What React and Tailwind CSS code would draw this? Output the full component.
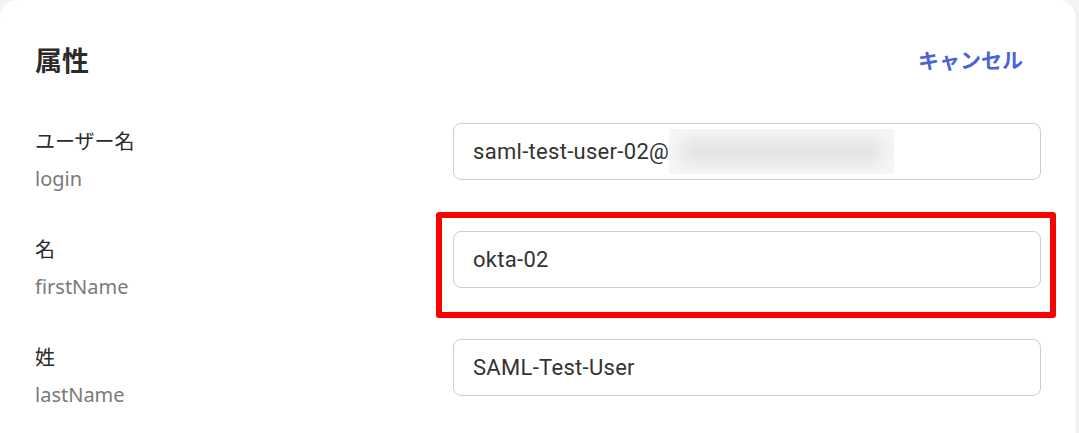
const FONT = { fontFamily: '"Noto Sans", "Noto Sans CJK JP", sans-serif' };
const INPUT_FONT = { fontFamily: 'Roboto, "Noto Sans", sans-serif' };

const ROWS = [
    { label: "ユーザー名", key: "login", value: "saml-test-user-02@", masked: true },
    { label: "名", key: "firstName", value: "okta-02", highlight: true },
    { label: "姓", key: "lastName", value: "SAML-Test-User" },
];

function Field({ value, masked }) {
    return (
        <div
            className="h-[57px] w-full rounded-[8px] border border-[#cfcfcf] bg-white pl-[19px] flex items-center text-[22px] tracking-[0.3px] text-[#333333]"
            style={INPUT_FONT}
        >
            <span>{value}</span>
            {masked && (
                <span className="relative inline-block w-[225px] h-[45px] overflow-hidden bg-[#f6f6f6]">
                    <span className="absolute left-[12px] right-[12px] top-[10px] bottom-[10px] rounded-full bg-[#e2e2e2] blur-[8px]" />
                </span>
            )}
        </div>
    );
}

export default function App() {
    return (
        <div className="min-h-[433px] bg-[#f4f4f4]" style={FONT}>
            <div className="w-[1077px] min-h-[433px] bg-white rounded-t-[18px] border-r border-[#ececec] pl-[35px] pr-[35px] pt-[36px]">
                <div className="flex items-center justify-between h-[50px] pr-[18px]">
                    <h2 className="text-[27px] font-bold text-[#2b2b2b]">属性</h2>
                    <button className="text-[21px] font-bold text-[#4b63d6]">キャンセル</button>
                </div>
                <div className="mt-[37px] flex flex-col">
                    {ROWS.map(row => (
                        <div key={row.key} className="flex items-start h-[108px]">
                            <div className="w-[418px] shrink-0 pt-[1px]">
                                <div className="text-[20px] leading-[36px] text-[#2b2b2b]">{row.label}</div>
                                <div className="text-[20px] leading-[38px] text-[#7a7a7a]">{row.key}</div>
                            </div>
                            <div className="relative flex-1">
                                <Field value={row.value} masked={row.masked} />
                                {row.highlight && (
                                    <div className="absolute left-[-17px] right-[-15px] top-[-19px] bottom-[-30px] border-[6px] border-[#ff0000] rounded-[3px] pointer-events-none" />
                                )}
                            </div>
                        </div>
                    ))}
                </div>
            </div>
        </div>
    );
}
